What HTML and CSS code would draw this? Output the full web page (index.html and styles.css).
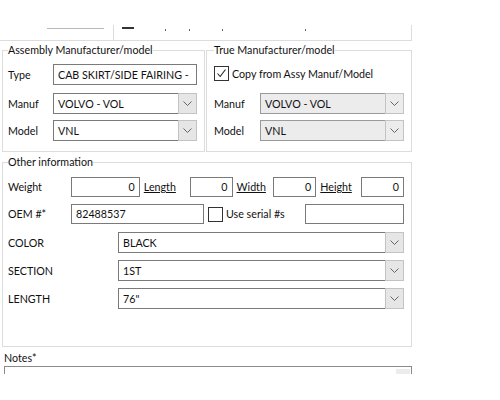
FILE: index.html
```html
<!DOCTYPE html>
<html lang="en">
<head>
    <meta charset="UTF-8">
    <title>Part details</title>
    <link rel="stylesheet" href="styles.css">
</head>
<body>
    <div class="top-strip">
        <div class="top-left"><span class="field-line"></span></div>
        <div class="top-right">
            <span class="dash"></span>
            <span class="dot d1"></span>
            <span class="dot d2"></span>
            <span class="dot d3"></span>
            <span class="dot d4"></span>
        </div>
    </div>

    <div class="groups">
        <fieldset class="group assy">
            <legend>Assembly Manufacturer/model</legend>
            <div class="row r-type">
                <label class="lbl">Type</label>
                <div class="input wide">CAB SKIRT/SIDE FAIRING -</div>
            </div>
            <div class="row r-manuf">
                <label class="lbl">Manuf</label>
                <div class="combo wide">
                    <div class="combo-value">VOLVO - VOL</div>
                    <div class="combo-btn"><svg width="9" height="5" viewBox="0 0 9 5"><path d="M0.5 0.5 L4.5 4.5 L8.5 0.5" fill="none" stroke="#666" stroke-width="1"/></svg></div>
                </div>
            </div>
            <div class="row r-model">
                <label class="lbl">Model</label>
                <div class="combo wide">
                    <div class="combo-value">VNL</div>
                    <div class="combo-btn"><svg width="9" height="5" viewBox="0 0 9 5"><path d="M0.5 0.5 L4.5 4.5 L8.5 0.5" fill="none" stroke="#666" stroke-width="1"/></svg></div>
                </div>
            </div>
        </fieldset>

        <fieldset class="group true">
            <legend>True Manufacturer/model</legend>
            <div class="row r-copy">
                <span class="check checked"><svg width="11" height="11" viewBox="0 0 11 11"><path d="M1.5 5.5 L4.2 8.5 L9.5 1.5" fill="none" stroke="#222" stroke-width="1.1"/></svg></span>
                <span class="check-text">Copy from Assy Manuf/Model</span>
            </div>
            <div class="row r-manuf">
                <label class="lbl true-lbl">Manuf</label>
                <div class="combo disabled wide">
                    <div class="combo-value">VOLVO - VOL</div>
                    <div class="combo-btn"><svg width="9" height="5" viewBox="0 0 9 5"><path d="M0.5 0.5 L4.5 4.5 L8.5 0.5" fill="none" stroke="#666" stroke-width="1"/></svg></div>
                </div>
            </div>
            <div class="row r-model">
                <label class="lbl true-lbl">Model</label>
                <div class="combo disabled wide">
                    <div class="combo-value">VNL</div>
                    <div class="combo-btn"><svg width="9" height="5" viewBox="0 0 9 5"><path d="M0.5 0.5 L4.5 4.5 L8.5 0.5" fill="none" stroke="#666" stroke-width="1"/></svg></div>
                </div>
            </div>
        </fieldset>
    </div>

    <fieldset class="group other">
        <legend>Other information</legend>
        <div class="row r-dims">
            <label class="lbl w-lbl">Weight</label>
            <div class="input num in-weight">0</div>
            <a class="link l-length">Length</a>
            <div class="input num in-small">0</div>
            <a class="link l-width">Width</a>
            <div class="input num in-small">0</div>
            <a class="link l-height">Height</a>
            <div class="input num in-small">0</div>
        </div>
        <div class="row r-oem">
            <label class="lbl w-lbl">OEM #*</label>
            <div class="input in-oem">82488537</div>
            <span class="check serial"></span>
            <span class="check-text">Use serial #s</span>
            <div class="input in-serial"></div>
        </div>
        <div class="row r-attr first">
            <label class="lbl attr-lbl">COLOR</label>
            <div class="combo grow">
                <div class="combo-value">BLACK</div>
                <div class="combo-btn"><svg width="9" height="5" viewBox="0 0 9 5"><path d="M0.5 0.5 L4.5 4.5 L8.5 0.5" fill="none" stroke="#666" stroke-width="1"/></svg></div>
            </div>
        </div>
        <div class="row r-attr">
            <label class="lbl attr-lbl">SECTION</label>
            <div class="combo grow">
                <div class="combo-value">1ST</div>
                <div class="combo-btn"><svg width="9" height="5" viewBox="0 0 9 5"><path d="M0.5 0.5 L4.5 4.5 L8.5 0.5" fill="none" stroke="#666" stroke-width="1"/></svg></div>
            </div>
        </div>
        <div class="row r-attr">
            <label class="lbl attr-lbl">LENGTH</label>
            <div class="combo grow">
                <div class="combo-value">76"</div>
                <div class="combo-btn"><svg width="9" height="5" viewBox="0 0 9 5"><path d="M0.5 0.5 L4.5 4.5 L8.5 0.5" fill="none" stroke="#666" stroke-width="1"/></svg></div>
            </div>
        </div>
    </fieldset>

    <div class="notes">
        <div class="notes-label">Notes*</div>
        <div class="notes-box"><span class="notes-scroll"></span></div>
    </div>
</body>
</html>
```

FILE: styles.css
```css
body {
    margin: 0;
    background: #fff;
    color: #111;
    font-family: Lato, "Liberation Sans", sans-serif;
    font-size: 10.7px;
    line-height: 14px;
}

/* strip left over from the section above */
.top-strip {
    display: flex;
    align-items: flex-end;
    width: 412px;
    height: 41px;
    box-sizing: border-box;
    border-bottom: 1px solid #dcdcdc;
}
.top-left {
    width: 113px;
    height: 15px;
    padding-left: 47px;
    box-sizing: border-box;
}
.field-line {
    display: block;
    width: 57px;
    margin-top: 3px;
    border-top: 1px solid #b9b9b9;
}
.top-right {
    flex: 1;
    height: 15px;
    border-left: 1px solid #dcdcdc;
    border-right: 1px solid #dcdcdc;
    position: relative;
}
.dash {
    position: absolute;
    left: 8px;
    top: 2px;
    width: 12px;
    border-top: 2px solid #333;
}
.dot {
    position: absolute;
    top: 4px;
    width: 1px;
    height: 2px;
    background: #666;
}
.d1 { left: 51px; }
.d2 { left: 75px; }
.d3 { left: 108px; }
.d4 { left: 191px; }

/* group boxes */
.group {
    margin: 0;
    border: 1px solid #dcdcdc;
    padding: 0 7px 0 5px;
    min-width: 0;
}
.group legend {
    padding: 0;
    line-height: 14px;
}

.groups {
    display: flex;
    width: 410px;
    margin: 2px 0 0 2px;
    gap: 1px;
}
.assy {
    width: 203px;
    box-sizing: border-box;
    padding-bottom: 10px;
}
.true {
    width: 206px;
    box-sizing: border-box;
    padding-left: 7px;
}

.row {
    display: flex;
    align-items: center;
    height: 21px;
}
.r-type { margin-top: 7px; }
.r-copy { margin-top: 6px; }
.r-manuf { margin-top: 8px; }
.true .r-manuf { margin-top: 9px; }
.r-model { margin-top: 6px; }

.lbl {
    width: 45px;
    flex-shrink: 0;
}
.true-lbl { width: 46px; }
.wide { width: 144px; }

.input {
    height: 21px;
    box-sizing: border-box;
    border: 1px solid #7a7a7a;
    background: #fff;
    padding: 0 4px;
    line-height: 19px;
    white-space: nowrap;
    overflow: hidden;
}
.num { text-align: right; }

.combo {
    display: flex;
    height: 21px;
}
.combo-value {
    flex: 1;
    border: 1px solid #7a7a7a;
    background: #fff;
    padding: 0 4px;
    line-height: 19px;
    white-space: nowrap;
    overflow: hidden;
}
.combo-btn {
    width: 17px;
    margin-left: -1px;
    border: 1px solid #c3c3c3;
    background: #e6e6e6;
    display: flex;
    align-items: center;
    justify-content: center;
}
.combo.disabled .combo-value {
    background: #ececec;
    border-color: #9a9a9a;
}
.combo.disabled .combo-btn {
    background: #ececec;
}

.check {
    width: 13px;
    height: 13px;
    border: 1px solid #333;
    background: #fff;
    flex-shrink: 0;
    display: flex;
    align-items: center;
    justify-content: center;
}
.check-text {
    margin-left: 3px;
    white-space: nowrap;
}

/* other information */
.other {
    width: 410px;
    box-sizing: border-box;
    margin: 3px 0 0 2px;
    padding-bottom: 37px;
}
.r-dims { margin-top: 8px; height: 20px; }
.r-oem { margin-top: 7px; height: 20px; }
.r-attr { margin-top: 7px; }
.r-attr.first { margin-top: 8px; }

.r-dims .input, .r-oem .input { height: 20px; line-height: 18px; }

.w-lbl { width: 63px; }
.attr-lbl { width: 110px; }
.grow { flex: 1; }

.in-weight { width: 69px; }
.in-small { width: 43px; }
.in-oem { width: 133px; }
.in-serial { width: 99px; margin-left: auto; }
.serial { margin-left: 4px; }

.link {
    color: #111;
    text-decoration: underline;
    padding-left: 4px;
    box-sizing: border-box;
    white-space: nowrap;
}
.l-length { width: 50px; }
.l-width { width: 41px; }
.l-height { width: 45px; }

/* notes */
.notes {
    margin: 4px 0 0 4px;
    width: 408px;
}
.notes-label { line-height: 14px; }
.notes-box {
    height: 7px;
    margin-top: 1px;
    border: 1px solid #8a8a8a;
    border-bottom: none;
    position: relative;
}
.notes-scroll {
    position: absolute;
    right: 1px;
    top: 2px;
    width: 14px;
    height: 5px;
    background: #ececec;
}
```
